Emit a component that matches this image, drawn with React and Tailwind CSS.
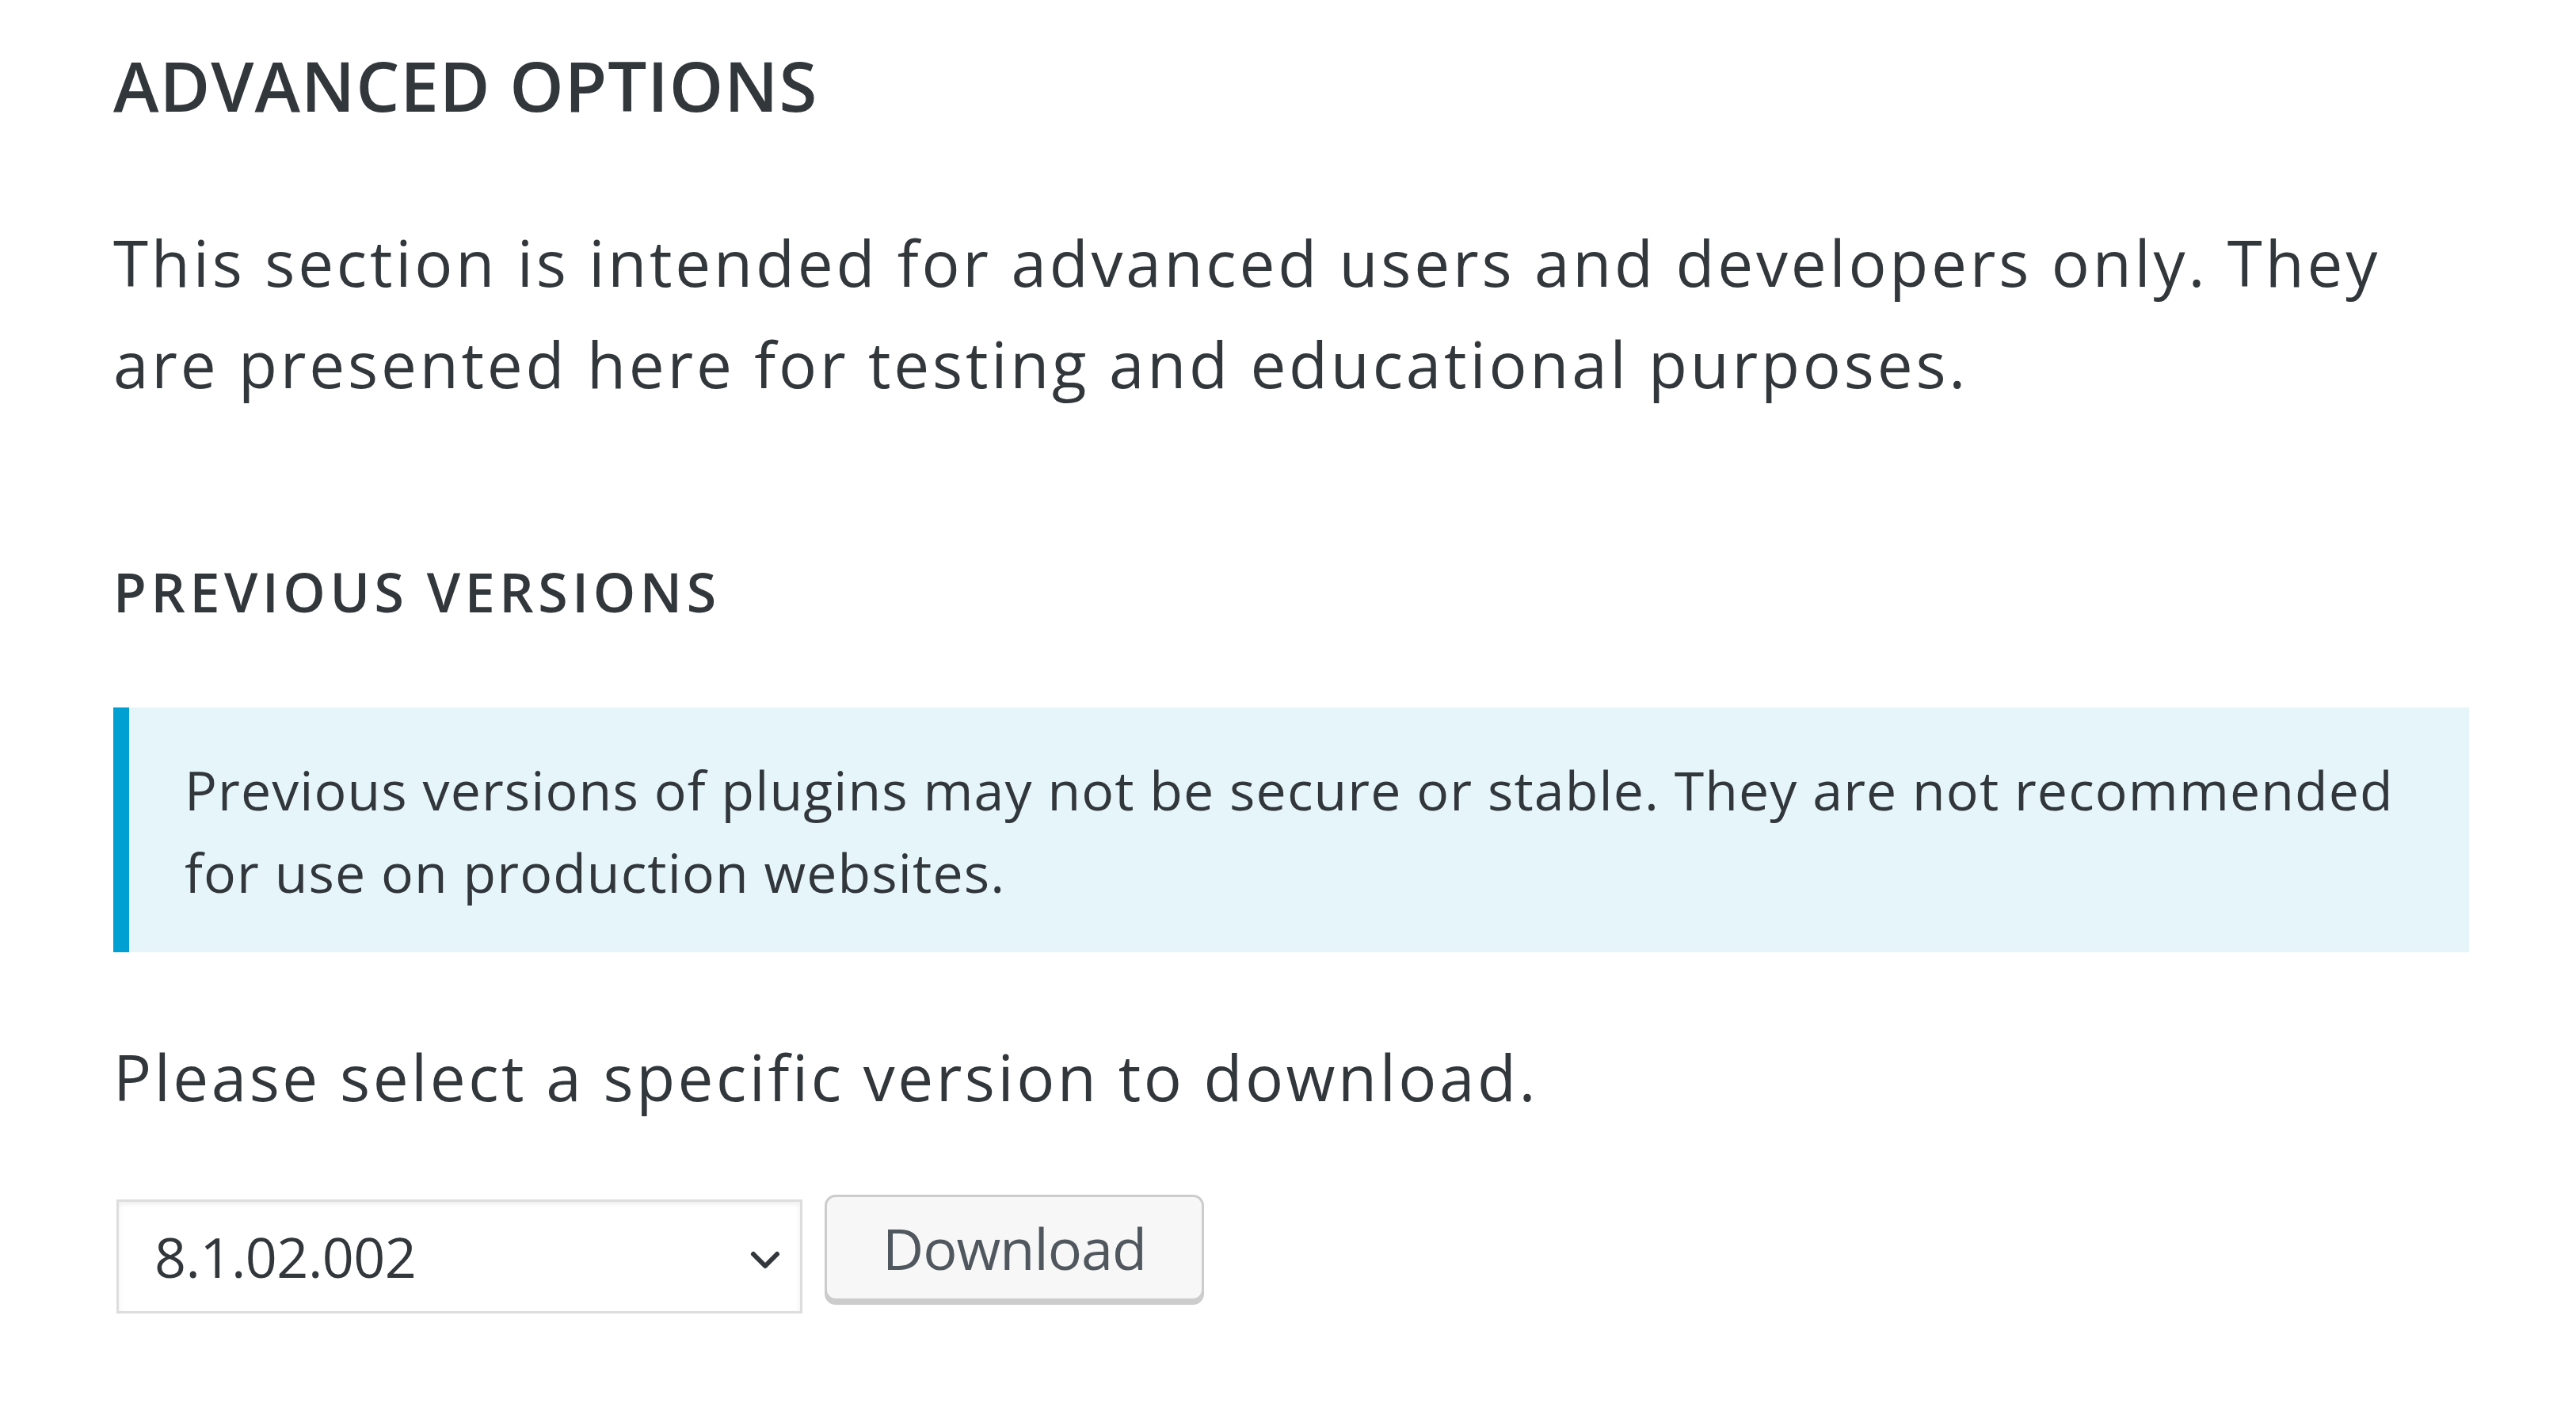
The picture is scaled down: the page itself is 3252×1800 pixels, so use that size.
export default function App() {
    return (
        <div className="min-h-screen bg-white pl-[143px] pr-[135px] pt-[52px] text-[#32373c] font-['Open_Sans',sans-serif]">
            {/* Advanced options */}
            <h2 className="text-[87px] leading-[110px] font-semibold uppercase tracking-[1px]">Advanced Options</h2>
            <p className="mt-[105px] text-[80px] leading-[128px] tracking-[3.8px]">
                This section is intended for advanced users and developers only. They are presented here for testing and educational purposes.
            </p>

            {/* Previous versions */}
            <h3 className="mt-[183px] text-[68px] leading-[82px] font-semibold uppercase tracking-[5.6px]">Previous Versions</h3>

            <div className="mt-[105px] border-l-[20px] border-[#00a0d2] bg-[#e5f5fa] pl-[70px] pr-[60px] pt-[52px] pb-[49px]">
                <p className="text-[68px] leading-[104px] tracking-[1.1px]">
                    Previous versions of plugins may not be secure or stable. They are not recommended for use on production websites.
                </p>
            </div>

            <p className="mt-[93px] text-[80px] leading-[128px] tracking-[3.5px]">Please select a specific version to download.</p>

            <div className="mt-[85px] flex items-start gap-[28px]">
                <div className="relative ml-[4px] mt-[6px]">
                    <select
                        defaultValue="8.1.02.002"
                        className="w-[866px] h-[144px] appearance-none bg-white border-[3px] border-[#ddd] shadow-[inset_0_3px_6px_rgba(0,0,0,0.07)] pl-[45px] pr-[100px] text-[70px] tracking-[-0.5px] text-[#32373c] outline-none font-['Open_Sans',sans-serif]"
                    >
                        <option>8.1.02.002</option>
                    </select>
                    <svg
                        className="absolute right-[27px] top-[64px] w-[40px] h-[25px] pointer-events-none"
                        viewBox="0 0 40 25"
                        fill="none"
                        stroke="#32373c"
                        strokeWidth="6"
                        strokeLinecap="round"
                        strokeLinejoin="round"
                    >
                        <path d="M5 5 L20 20 L35 5" />
                    </svg>
                </div>
                <button className="w-[479px] h-[134px] rounded-[14px] border-[3px] border-[#ccc] bg-[#f7f7f7] shadow-[0_5px_0_#ccc] text-[72px] tracking-[-1px] text-[#50575e]">
                    Download
                </button>
            </div>
        </div>
    )
}
